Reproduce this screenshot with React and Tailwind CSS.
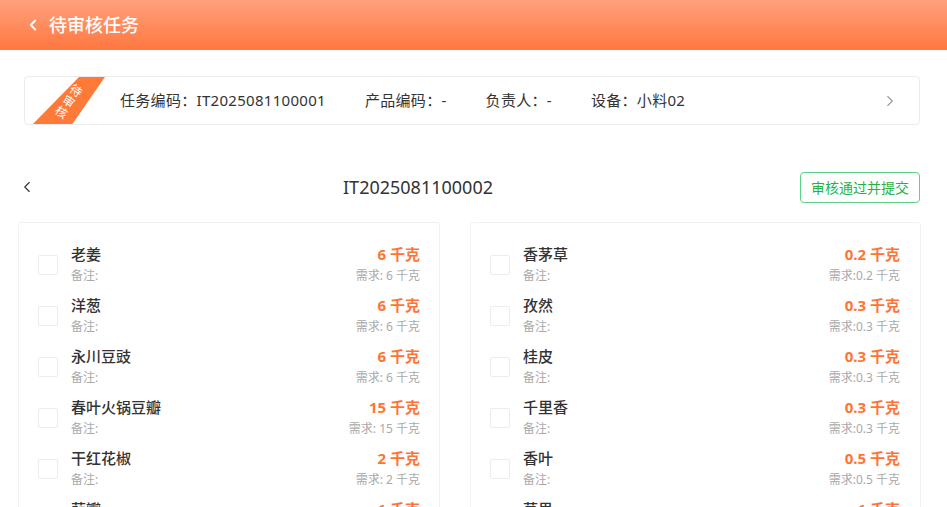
import { ChevronLeft, ChevronRight } from "lucide-react";

const left = [
  { name: "老姜", qty: "6 千克", need: "需求: 6 千克" },
  { name: "洋葱", qty: "6 千克", need: "需求: 6 千克" },
  { name: "永川豆豉", qty: "6 千克", need: "需求: 6 千克" },
  { name: "春叶火锅豆瓣", qty: "15 千克", need: "需求: 15 千克" },
  { name: "干红花椒", qty: "2 千克", need: "需求: 2 千克" },
  { name: "蒜瓣", qty: "1 千克", need: "需求: 1 千克" },
];

const right = [
  { name: "香茅草", qty: "0.2 千克", need: "需求:0.2 千克" },
  { name: "孜然", qty: "0.3 千克", need: "需求:0.3 千克" },
  { name: "桂皮", qty: "0.3 千克", need: "需求:0.3 千克" },
  { name: "千里香", qty: "0.3 千克", need: "需求:0.3 千克" },
  { name: "香叶", qty: "0.5 千克", need: "需求:0.5 千克" },
  { name: "草果", qty: "1 千克", need: "需求:1 千克" },
];

function Item({ item }) {
  return (
    <div className="flex items-center h-[51px] pt-[5px]">
      <div className="w-[20px] h-[20px] border border-[#ececec] rounded-[2px] mr-[13px] shrink-0" />
      <div className="flex-1 flex flex-col">
        <div className="text-[15px] leading-[20px] text-[#333] font-medium">{item.name}</div>
        <div className="text-[12px] leading-[20px] mt-[2px] text-[#aaa]">备注:</div>
      </div>
      <div className="flex flex-col items-end">
        <div className="text-[15px] leading-[20px] text-[#ff7433] font-bold">{item.qty}</div>
        <div className="text-[12px] leading-[20px] mt-[2px] text-[#aaa]">{item.need}</div>
      </div>
    </div>
  );
}

export default function App() {
  return (
    <div
      className="h-screen w-full overflow-hidden bg-white"
      style={{ fontFamily: '"Noto Sans", "Noto Sans CJK SC", sans-serif' }}
    >
      <header className="h-[50px] bg-gradient-to-b from-[#ffa07c] to-[#ff773d] flex items-center pl-[24px]">
        <ChevronLeft className="w-[18px] h-[18px] text-white" strokeWidth={2.5} />
        <span className="ml-[7px] text-white text-[18px] font-medium">待审核任务</span>
      </header>

      <div className="relative mt-[26px] ml-[24px] mr-[27px] h-[49px] border border-[#ebebeb] rounded-[4px] overflow-hidden flex items-center">
        <svg className="absolute left-0 top-0" width="90" height="49" viewBox="0 0 90 49">
          <polygon points="54,0 80,0 46,49 6,49" fill="#ff7a38" />
        </svg>
        <div className="absolute left-[37px] top-[4px] w-[14px] h-[40px] flex flex-col items-center justify-center text-white text-[12px] leading-[13px] rotate-[34deg] origin-center">
          <span>待</span>
          <span>审</span>
          <span>核</span>
        </div>
        <div className="flex items-center gap-[39px] pl-[95px] text-[15px] tracking-[0.3px] text-[#333] flex-1">
          <span>任务编码：IT2025081100001</span>
          <span>产品编码：-</span>
          <span>负责人：-</span>
          <span>设备：小料02</span>
        </div>
        <ChevronRight className="w-[18px] h-[18px] text-[#999] mr-[20px]" strokeWidth={1.5} />
      </div>

      <div className="flex items-center mt-[46px] ml-[18px] mr-[27px] h-[32px]">
        <ChevronLeft className="w-[18px] h-[18px] text-[#333]" strokeWidth={1.5} />
        <div className="flex-1 text-center text-[18px] text-[#333]">IT2025081100002</div>
        <button className="h-[31px] px-[10px] border border-[#5fd184] rounded-[4px] text-[#1fb446] text-[14px]">
          审核通过并提交
        </button>
      </div>

      <div className="flex gap-[30px] mt-[19px] ml-[18px]">
        <div className="w-[422px] border border-[#f2f2f2] rounded-[3px] pt-[14px] px-[19px]">
          {left.map((it) => (
            <Item key={it.name} item={it} />
          ))}
        </div>
        <div className="w-[451px] border border-[#f2f2f2] rounded-[3px] pt-[14px] pl-[19px] pr-[20px]">
          {right.map((it) => (
            <Item key={it.name} item={it} />
          ))}
        </div>
      </div>
    </div>
  );
}
